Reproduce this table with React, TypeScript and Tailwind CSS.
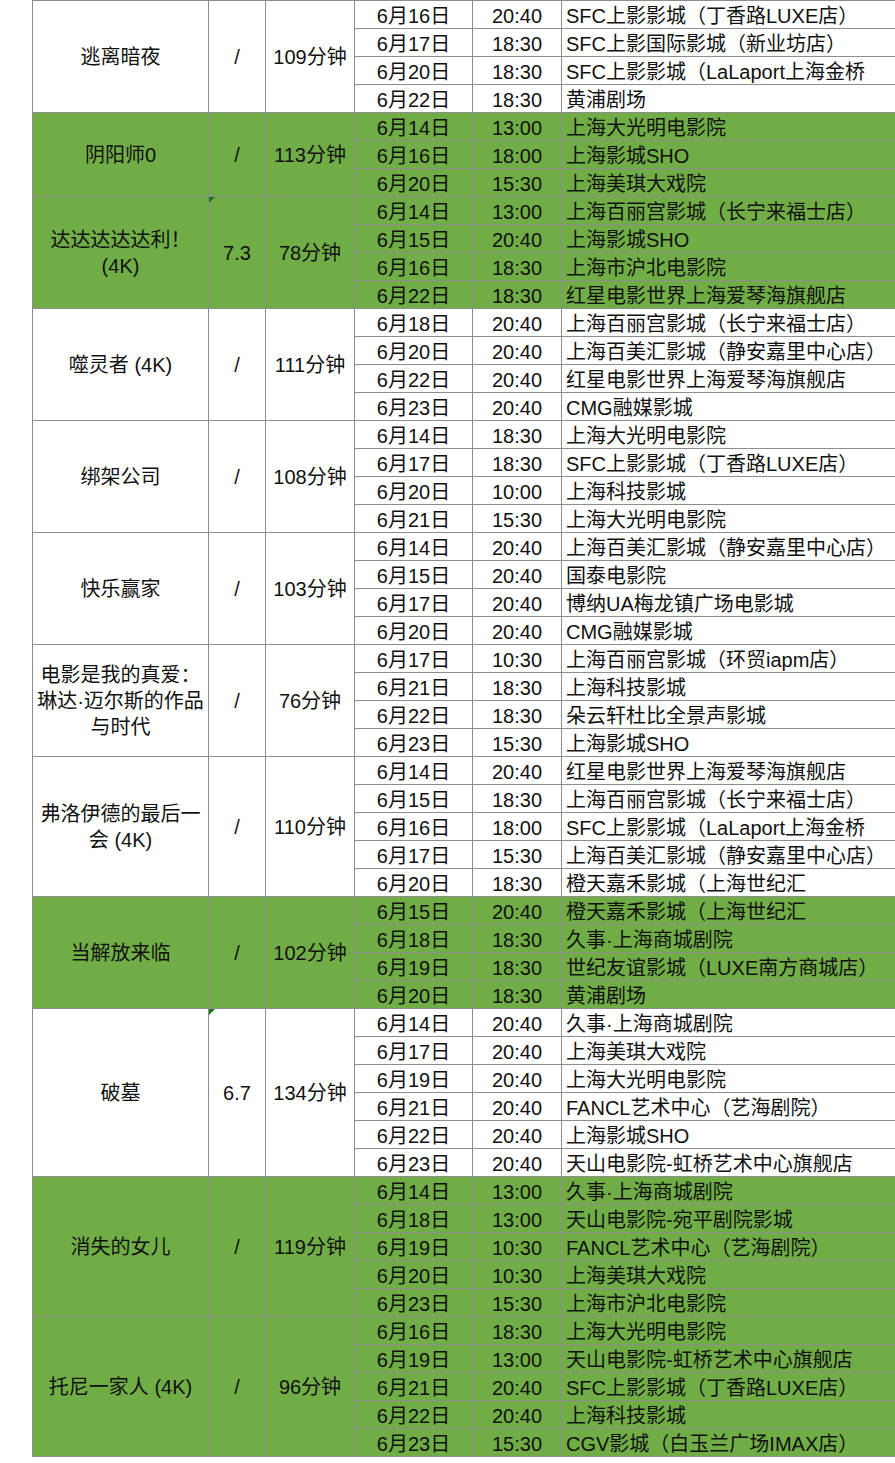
import React from 'react';

type Show = [string, string, string];

interface Film {
    name: string[];
    rating: string;
    length: string;
    green?: boolean;
    marker?: boolean;
    shows: Show[];
}

const films: Film[] = [
    {
        name: ['逃离暗夜'],
        rating: '/',
        length: '109分钟',
        shows: [
            ['6月16日', '20:40', 'SFC上影影城（丁香路LUXE店）'],
            ['6月17日', '18:30', 'SFC上影国际影城（新业坊店）'],
            ['6月20日', '18:30', 'SFC上影影城（LaLaport上海金桥'],
            ['6月22日', '18:30', '黄浦剧场'],
        ],
    },
    {
        name: ['阴阳师0'],
        rating: '/',
        length: '113分钟',
        green: true,
        shows: [
            ['6月14日', '13:00', '上海大光明电影院'],
            ['6月16日', '18:00', '上海影城SHO'],
            ['6月20日', '15:30', '上海美琪大戏院'],
        ],
    },
    {
        name: ['达达达达达利！', '(4K)'],
        rating: '7.3',
        length: '78分钟',
        green: true,
        marker: true,
        shows: [
            ['6月14日', '13:00', '上海百丽宫影城（长宁来福士店）'],
            ['6月15日', '20:40', '上海影城SHO'],
            ['6月16日', '18:30', '上海市沪北电影院'],
            ['6月22日', '18:30', '红星电影世界上海爱琴海旗舰店'],
        ],
    },
    {
        name: ['噬灵者 (4K)'],
        rating: '/',
        length: '111分钟',
        shows: [
            ['6月18日', '20:40', '上海百丽宫影城（长宁来福士店）'],
            ['6月20日', '20:40', '上海百美汇影城（静安嘉里中心店）'],
            ['6月22日', '20:40', '红星电影世界上海爱琴海旗舰店'],
            ['6月23日', '20:40', 'CMG融媒影城'],
        ],
    },
    {
        name: ['绑架公司'],
        rating: '/',
        length: '108分钟',
        shows: [
            ['6月14日', '18:30', '上海大光明电影院'],
            ['6月17日', '18:30', 'SFC上影影城（丁香路LUXE店）'],
            ['6月20日', '10:00', '上海科技影城'],
            ['6月21日', '15:30', '上海大光明电影院'],
        ],
    },
    {
        name: ['快乐赢家'],
        rating: '/',
        length: '103分钟',
        shows: [
            ['6月14日', '20:40', '上海百美汇影城（静安嘉里中心店）'],
            ['6月15日', '20:40', '国泰电影院'],
            ['6月17日', '20:40', '博纳UA梅龙镇广场电影城'],
            ['6月20日', '20:40', 'CMG融媒影城'],
        ],
    },
    {
        name: ['电影是我的真爱：', '琳达·迈尔斯的作品', '与时代'],
        rating: '/',
        length: '76分钟',
        shows: [
            ['6月17日', '10:30', '上海百丽宫影城（环贸iapm店）'],
            ['6月21日', '18:30', '上海科技影城'],
            ['6月22日', '18:30', '朵云轩杜比全景声影城'],
            ['6月23日', '15:30', '上海影城SHO'],
        ],
    },
    {
        name: ['弗洛伊德的最后一', '会 (4K)'],
        rating: '/',
        length: '110分钟',
        shows: [
            ['6月14日', '20:40', '红星电影世界上海爱琴海旗舰店'],
            ['6月15日', '18:30', '上海百丽宫影城（长宁来福士店）'],
            ['6月16日', '18:00', 'SFC上影影城（LaLaport上海金桥'],
            ['6月17日', '15:30', '上海百美汇影城（静安嘉里中心店）'],
            ['6月20日', '18:30', '橙天嘉禾影城（上海世纪汇'],
        ],
    },
    {
        name: ['当解放来临'],
        rating: '/',
        length: '102分钟',
        green: true,
        shows: [
            ['6月15日', '20:40', '橙天嘉禾影城（上海世纪汇'],
            ['6月18日', '18:30', '久事·上海商城剧院'],
            ['6月19日', '18:30', '世纪友谊影城（LUXE南方商城店）'],
            ['6月20日', '18:30', '黄浦剧场'],
        ],
    },
    {
        name: ['破墓'],
        rating: '6.7',
        length: '134分钟',
        marker: true,
        shows: [
            ['6月14日', '20:40', '久事·上海商城剧院'],
            ['6月17日', '20:40', '上海美琪大戏院'],
            ['6月19日', '20:40', '上海大光明电影院'],
            ['6月21日', '20:40', 'FANCL艺术中心（艺海剧院）'],
            ['6月22日', '20:40', '上海影城SHO'],
            ['6月23日', '20:40', '天山电影院-虹桥艺术中心旗舰店'],
        ],
    },
    {
        name: ['消失的女儿'],
        rating: '/',
        length: '119分钟',
        green: true,
        shows: [
            ['6月14日', '13:00', '久事·上海商城剧院'],
            ['6月18日', '13:00', '天山电影院-宛平剧院影城'],
            ['6月19日', '10:30', 'FANCL艺术中心（艺海剧院）'],
            ['6月20日', '10:30', '上海美琪大戏院'],
            ['6月23日', '15:30', '上海市沪北电影院'],
        ],
    },
    {
        name: ['托尼一家人 (4K)'],
        rating: '/',
        length: '96分钟',
        green: true,
        shows: [
            ['6月16日', '18:30', '上海大光明电影院'],
            ['6月19日', '13:00', '天山电影院-虹桥艺术中心旗舰店'],
            ['6月21日', '20:40', 'SFC上影影城（丁香路LUXE店）'],
            ['6月22日', '20:40', '上海科技影城'],
            ['6月23日', '15:30', 'CGV影城（白玉兰广场IMAX店）'],
        ],
    },
];

function FilmGroup({ film }: { film: Film }) {
    const bg = film.green ? 'bg-[#70ad47]' : 'bg-white';
    const cell = 'flex items-center justify-center border-r border-b border-[#8e8e8e]';

    return (
        <div className={`flex ${bg}`}>
            <div className={`${cell} w-[176px] flex-col text-center leading-[26px]`}>
                {film.name.map((line) => (
                    <span key={line} className="whitespace-nowrap">
                        {line}
                    </span>
                ))}
            </div>
            <div className={`${cell} relative w-[57px]`}>
                {film.marker && (
                    <span className="absolute top-0 left-0 h-0 w-0 border-t-[6px] border-r-[6px] border-t-[#16761a] border-r-transparent" />
                )}
                {film.rating}
            </div>
            <div className={`${cell} w-[89px]`}>{film.length}</div>
            <div className="flex flex-1 flex-col">
                {film.shows.map(([date, time, venue], i) => (
                    <div key={i} className="flex h-[28px] border-b border-[#8e8e8e] leading-[28px]">
                        <div className="flex w-[118px] items-center justify-center border-r border-[#8e8e8e] pt-[3px]">
                            {date}
                        </div>
                        <div className="flex w-[89px] items-center justify-center border-r border-[#8e8e8e] pt-[3px]">
                            {time}
                        </div>
                        <div className="flex flex-1 items-center pt-[3px] pl-[4px] whitespace-nowrap">{venue}</div>
                    </div>
                ))}
            </div>
        </div>
    );
}

export default function App() {
    return (
        <div
            className="h-[1463px] w-[895px] overflow-hidden bg-white pl-[32px] text-[20px] text-[#111]"
            style={{ fontFamily: '"Liberation Sans", "Noto Sans CJK SC", sans-serif' }}
        >
            <div className="w-[1000px] border-t border-l border-[#8e8e8e]">
                {films.map((film) => (
                    <FilmGroup key={film.name.join('')} film={film} />
                ))}
            </div>
        </div>
    );
}
